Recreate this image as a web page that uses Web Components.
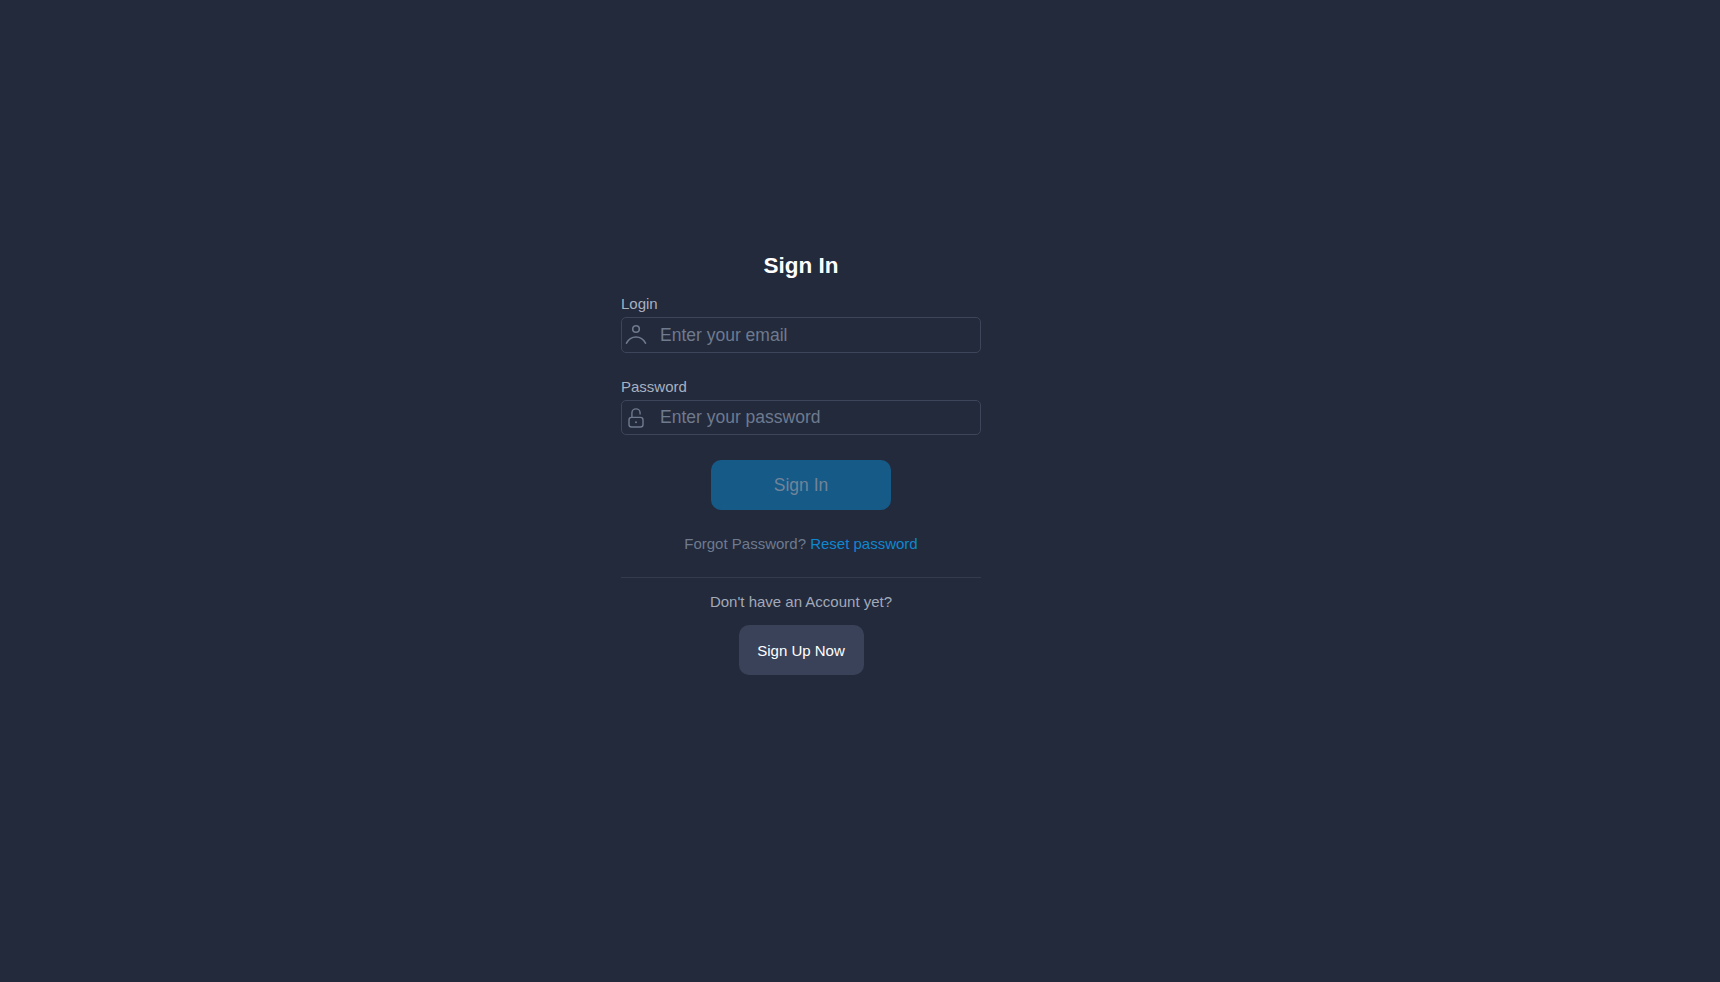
<!DOCTYPE html>
<html lang="en">
<head>
<meta charset="utf-8">
<title>Sign In</title>
<style>
  html, body { margin: 0; height: 100%; background: #222a3c; }
  body { font-family: "Liberation Sans", Arial, sans-serif; }
</style>
</head>
<body>
<auth-page>
  <sign-in-form></sign-in-form>
</auth-page>

<template id="auth-page">
  <style>
    :host { display: flex; justify-content: center; align-items: flex-start; box-sizing: border-box; min-height: 100vh; padding: 250px 118px 0 0; background: #222a3c; }
  </style>
  <slot></slot>
</template>

<template id="text-field">
  <style>
    :host { display: block; }
    label { display: block; height: 17px; line-height: 17px; margin-bottom: 5px; font-size: 15px; color: #a9b1c0; }
    .box { display: flex; align-items: center; box-sizing: border-box; height: var(--box-height, 36px); border: 1px solid #3c4559; border-radius: 5px; }
    .icon { display: flex; flex: none; justify-content: center; width: 28px; color: #6f7a8e; }
    input { flex: 1; min-width: 0; margin-left: 10px; padding: 0; border: 0; outline: 0; background: transparent; font: 17.5px "Liberation Sans", Arial, sans-serif; color: #fff; }
    input::placeholder { color: #6f7a8e; opacity: 1; }
    ::slotted(svg) { display: block; }
  </style>
  <label></label>
  <div class="box">
    <span class="icon"><slot></slot></span>
    <input>
  </div>
</template>

<template id="app-button">
  <style>
    :host { display: flex; align-items: center; justify-content: center; box-sizing: border-box; height: 50px; border-radius: 10px; cursor: pointer; }
    :host([variant="primary"]) { width: 180px; background: #165a87; color: #71849a; font-size: 17.5px; }
    :host([variant="secondary"]) { width: 125px; background: #3a4259; color: #fff; font-size: 15px; }
  </style>
  <slot></slot>
</template>

<template id="sign-in-form">
  <style>
    :host { display: flex; flex-direction: column; align-items: center; width: 360px; }
    h1 { margin: 0 0 13px; font-size: 22.5px; line-height: 32px; font-weight: 700; color: #fff; }
    text-field { align-self: stretch; }
    #password { margin-top: 25px; --box-height: 35px; }
    app-button[variant="primary"] { margin-top: 25px; }
    .forgot { margin-top: 25px; font-size: 15px; line-height: 17px; color: #6f7a8e; }
    a { color: #0f87d0; text-decoration: none; }
    hr { align-self: stretch; height: 1px; margin: 25px 0 0; border: 0; background: #333c4e; }
    .signup { margin: 15px 0; font-size: 15px; line-height: 17px; color: #a2a9b8; }
  </style>
  <h1>Sign In</h1>
  <text-field id="login" label="Login" placeholder="Enter your email">
    <svg width="22" height="22" viewBox="0 0 22 22" fill="none" stroke="currentColor" stroke-width="1.6" stroke-linecap="round">
      <circle cx="11" cy="5" r="3.3"/>
      <path d="M1.5 19.2C3.5 15.2 7 13 11 13s7.5 2.2 9.5 6.2"/>
    </svg>
  </text-field>
  <text-field id="password" label="Password" placeholder="Enter your password">
    <svg width="22" height="22" viewBox="0 0 22 22" fill="none" stroke="currentColor" stroke-width="1.4">
      <rect x="4" y="10.4" width="14" height="9.6" rx="2.5"/>
      <path d="M6.9 10.4V6a4.1 4.1 0 0 1 8.2 0v1.4"/>
      <circle cx="11" cy="15.2" r="1" fill="currentColor" stroke="none"/>
    </svg>
  </text-field>
  <app-button variant="primary">Sign In</app-button>
  <div class="forgot">Forgot Password? <a href="#">Reset password</a></div>
  <hr>
  <div class="signup">Don't have an Account yet?</div>
  <app-button variant="secondary">Sign Up Now</app-button>
</template>

<script>
  function stamp(el, id) {
    el.attachShadow({mode: 'open'}).appendChild(document.querySelector('#' + id).content.cloneNode(true));
  }
  customElements.define('auth-page', class extends HTMLElement {
    constructor() { super(); stamp(this, 'auth-page'); }
  });
  customElements.define('text-field', class extends HTMLElement {
    constructor() { super(); stamp(this, 'text-field'); }
    connectedCallback() {
      this.shadowRoot.querySelector('label').textContent = this.getAttribute('label');
      this.shadowRoot.querySelector('input').placeholder = this.getAttribute('placeholder');
    }
  });
  customElements.define('app-button', class extends HTMLElement {
    constructor() { super(); stamp(this, 'app-button'); }
  });
  customElements.define('sign-in-form', class extends HTMLElement {
    constructor() { super(); stamp(this, 'sign-in-form'); }
  });
</script>
</body>
</html>
